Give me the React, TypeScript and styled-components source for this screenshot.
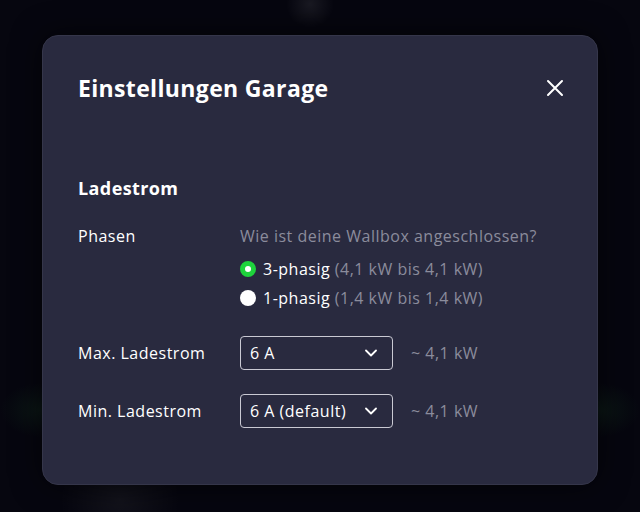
import React, { useState } from "react";
import styled, { createGlobalStyle } from "styled-components";

const GlobalStyle = createGlobalStyle`
  html, body {
    margin: 0;
    padding: 0;
    background: #06060f;
    font-family: "Open Sans", "Noto Sans", sans-serif;
    color: #ffffff;
  }
`;

const Backdrop = styled.div`
  width: 640px;
  height: 512px;
  box-sizing: border-box;
  padding: 35px 42px 27px;
  background:
    radial-gradient(circle at 310px 4px, rgba(255, 255, 255, 0.08), transparent 24px),
    radial-gradient(ellipse at 120px 500px, rgba(255, 255, 255, 0.05), transparent 60px),
    radial-gradient(ellipse at 40px 410px, rgba(60, 200, 80, 0.08), transparent 40px),
    radial-gradient(ellipse at 600px 410px, rgba(60, 200, 80, 0.08), transparent 40px),
    #06060f;
  overflow: hidden;
`;

const Modal = styled.div`
  height: 100%;
  box-sizing: border-box;
  background: #292a3f;
  border: 1px solid #35364a;
  border-radius: 16px;
  padding: 37px 27px 0 35px;
  box-shadow: 0 0 30px rgba(0, 0, 0, 0.6);
`;

const Header = styled.div`
  display: flex;
  align-items: center;
  justify-content: space-between;
  height: 30px;
`;

const Title = styled.h2`
  margin: 0;
  font-size: 23px;
  font-weight: 700;
  letter-spacing: 0.35px;
`;

const CloseButton = styled.button`
  width: 30px;
  height: 30px;
  border: none;
  background: none;
  padding: 0;
  display: flex;
  align-items: center;
  justify-content: center;
  cursor: pointer;
  color: #ffffff;
`;

const Section = styled.div`
  margin-top: 74px;
  display: flex;
  flex-direction: column;
  font-size: 16px;
  letter-spacing: 0.5px;
`;

const SectionTitle = styled.h3`
  margin: 0 0 26px;
  font-size: 18px;
  font-weight: 700;
  line-height: 22px;
  letter-spacing: 0.4px;
`;

const Row = styled.div<{ $gap?: number }>`
  display: grid;
  grid-template-columns: 162px 1fr;
  align-items: center;
  margin-bottom: ${(p) => p.$gap ?? 0}px;
`;

const Label = styled.div<{ $top?: boolean }>`
  line-height: 22px;
  align-self: ${(p) => (p.$top ? "start" : "center")};
`;

const Options = styled.div`
  display: flex;
  flex-direction: column;
`;

const Hint = styled.div`
  line-height: 22px;
  color: #8b8c9c;
  margin-bottom: 7px;
`;

const RadioRow = styled.label`
  display: flex;
  align-items: center;
  gap: 7px;
  height: 29px;
  cursor: pointer;
`;

const RadioDot = styled.span<{ $checked: boolean }>`
  width: 16px;
  height: 16px;
  border-radius: 50%;
  box-sizing: border-box;
  background: #ffffff;
  border: ${(p) => (p.$checked ? "5px solid #1ed33c" : "none")};
  flex-shrink: 0;
`;

const Muted = styled.span`
  color: #8b8c9c;
`;

const SelectLine = styled.div`
  display: flex;
  align-items: center;
  gap: 18px;
`;

const SelectBox = styled.div`
  width: 153px;
  height: 34px;
  box-sizing: border-box;
  border: 1px solid #c9c9d3;
  border-radius: 4px;
  display: flex;
  align-items: center;
  justify-content: space-between;
  padding: 0 15px 0 9px;
  cursor: pointer;
`;

const Power = styled.span`
  color: #8b8c9c;
`;

const Chevron = () => (
  <svg width="12" height="8" viewBox="0 0 12 8" fill="none">
    <path d="M1 1.5L6 6.5L11 1.5" stroke="#ffffff" strokeWidth="1.8" strokeLinecap="round" strokeLinejoin="round" />
  </svg>
);

const CloseIcon = () => (
  <svg width="18" height="18" viewBox="0 0 18 18" fill="none">
    <path d="M2 2L16 16M16 2L2 16" stroke="#ffffff" strokeWidth="2" strokeLinecap="round" />
  </svg>
);

export default function App() {
  const [phase, setPhase] = useState<"3" | "1">("3");

  return (
    <>
      <GlobalStyle />
      <Backdrop>
        <Modal>
          <Header>
            <Title>Einstellungen Garage</Title>
            <CloseButton aria-label="Schließen">
              <CloseIcon />
            </CloseButton>
          </Header>
          <Section>
            <SectionTitle>Ladestrom</SectionTitle>
            <Row $gap={24}>
              <Label $top>Phasen</Label>
              <Options>
                <Hint>Wie ist deine Wallbox angeschlossen?</Hint>
                <RadioRow onClick={() => setPhase("3")}>
                  <RadioDot $checked={phase === "3"} />
                  <span>
                    3-phasig <Muted>(4,1 kW bis 4,1 kW)</Muted>
                  </span>
                </RadioRow>
                <RadioRow onClick={() => setPhase("1")}>
                  <RadioDot $checked={phase === "1"} />
                  <span>
                    1-phasig <Muted>(1,4 kW bis 1,4 kW)</Muted>
                  </span>
                </RadioRow>
              </Options>
            </Row>
            <Row $gap={24}>
              <Label>Max. Ladestrom</Label>
              <SelectLine>
                <SelectBox>
                  <span>6 A</span>
                  <Chevron />
                </SelectBox>
                <Power>~ 4,1 kW</Power>
              </SelectLine>
            </Row>
            <Row>
              <Label>Min. Ladestrom</Label>
              <SelectLine>
                <SelectBox>
                  <span>6 A (default)</span>
                  <Chevron />
                </SelectBox>
                <Power>~ 4,1 kW</Power>
              </SelectLine>
            </Row>
          </Section>
        </Modal>
      </Backdrop>
    </>
  );
}
